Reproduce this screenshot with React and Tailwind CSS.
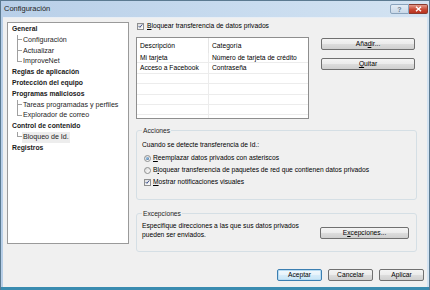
import { Fragment } from 'react';

const tree = [
    { label: 'General', children: ['Configuración', 'Actualizar', 'ImproveNet'] },
    { label: 'Reglas de aplicación' },
    { label: 'Protección del equipo' },
    { label: 'Programas maliciosos', children: ['Tareas programadas y perfiles', 'Explorador de correo'] },
    { label: 'Control de contenido', children: ['Bloqueo de Id.'] },
    { label: 'Registros' },
];

const rows = [
    ['Mi tarjeta', 'Número de tarjeta de crédito'],
    ['Acceso a Facebook', 'Contraseña'],
    ['', ''],
    ['', ''],
    ['', ''],
    ['', ''],
    ['', ''],
];

const btn =
    'flex items-center justify-center h-[12px] rounded-[2px] border border-[#707070] bg-[linear-gradient(to_bottom,#f4f4f4_0%,#ebebeb_50%,#dddddd_50%,#cfcfcf_100%)] text-black';

function Check() {
    return (
        <span className="flex h-[7px] w-[7px] shrink-0 items-center justify-center border border-[#8e8f8f] bg-[linear-gradient(135deg,#dcdcdc,#ffffff)]">
            <svg width="6" height="6" viewBox="0 0 6 6">
                <path d="M0.8 3.1 L2.3 4.6 L5.2 1" fill="none" stroke="#3b4f8a" strokeWidth="1.2" />
            </svg>
        </span>
    );
}

function Radio({ on }) {
    return (
        <span className="flex h-[7px] w-[7px] shrink-0 items-center justify-center rounded-full border border-[#8e8f8f] bg-[linear-gradient(135deg,#d8d8d8,#ffffff)]">
            {on && <span className="h-[3px] w-[3px] rounded-full bg-[radial-gradient(circle_at_35%_35%,#9ecbf0,#2a5a8c)]" />}
        </span>
    );
}

export default function App() {
    return (
        <div className="flex h-[290px] w-[430px] flex-col border-x border-t border-[#5b7a91] bg-[linear-gradient(to_right,#b8cfe8,#c9dcef_60%,#d3e3f2)] font-['Liberation_Sans',Arial,sans-serif] text-[6.7px] text-black">
            {/* title bar */}
            <div className="flex h-[16px] shrink-0 items-start justify-between pl-[3px] pr-[1px]">
                <span className="mt-[3px] text-[7.5px] leading-[10px] text-[#1e1e1e]">Configuración</span>
                <div className="mt-[3px] flex">
                    <span className="flex h-[10px] w-[19px] items-center justify-center rounded-l-[2px] border border-[#8aa3bc] bg-[linear-gradient(to_bottom,#e3ecf5,#c9d8e8)] text-[7px] font-bold leading-none text-[#6d7f93]">
                        ?
                    </span>
                    <span className="flex h-[10px] w-[19px] items-center justify-center rounded-r-[2px] border border-l-0 border-[#8a3a2e] bg-[linear-gradient(to_bottom,#e39b8c,#c94a35_55%,#b8321f)]">
                        <svg width="7" height="6" viewBox="0 0 7 6">
                            <path d="M1 0.8 L6 5.2 M6 0.8 L1 5.2" stroke="#ffffff" strokeWidth="1.4" />
                        </svg>
                    </span>
                </div>
            </div>

            {/* client */}
            <div className="mx-[2px] flex flex-1 flex-col border-t border-[#e8eef5] bg-[#f0f0f0]">
                <div className="flex items-start gap-[7px] pl-[4px] pt-[4px]">
                    {/* tree */}
                    <div className="h-[222px] w-[122px] shrink-0 border border-[#9a9a9a] bg-white pl-[4px] pt-[1px] text-[7.1px]">
                        {tree.map((node) => (
                            <Fragment key={node.label}>
                                <div className="h-[10.8px] text-[6.8px] font-bold leading-[10.8px] text-[#1a1a1a]">{node.label}</div>
                                {node.children?.map((child, i) => {
                                    const last = i === node.children.length - 1;
                                    return (
                                        <div key={child} className="flex h-[10.8px]">
                                            <div className="ml-[5px] flex w-[5px] flex-col">
                                                <div className="h-1/2 border-b border-l border-[#a0a0a0]" />
                                                <div className={last ? 'flex-1' : 'flex-1 border-l border-[#a0a0a0]'} />
                                            </div>
                                            <span
                                                className={
                                                    child === 'Bloqueo de Id.'
                                                        ? 'bg-[#ededed] px-[1px] leading-[10.8px] text-[#1e1e1e]'
                                                        : 'ml-[1px] leading-[10.8px] text-[#1e1e1e]'
                                                }
                                            >
                                                {child}
                                            </span>
                                        </div>
                                    );
                                })}
                            </Fragment>
                        ))}
                    </div>

                    {/* right pane */}
                    <div className="flex w-[281px] flex-col">
                        <div className="flex h-[8px] items-center gap-[3px] pl-[1px]">
                            <Check />
                            <span>
                                <u>B</u>loquear transferencia de datos privados
                            </span>
                        </div>

                        <div className="mt-[7px] flex items-start">
                            <div className="h-[82px] w-[173px] overflow-hidden border border-[#8e8e8e] bg-white">
                                <div className="flex h-[15px] items-center">
                                    <span className="w-[72px] border-r border-[#e5e5e5] pl-[3px] leading-[15px]">Descripción</span>
                                    <span className="pl-[3px] leading-[15px]">Categoría</span>
                                </div>
                                {rows.map((r, i) => (
                                    <div key={i} className="flex h-[10.4px] border-b border-[#ececec]">
                                        <span className="w-[72px] border-r border-[#ececec] pl-[3px] leading-[10px]">{r[0]}</span>
                                        <span className="pl-[3px] leading-[10px]">{r[1]}</span>
                                    </div>
                                ))}
                            </div>
                            <div className="ml-[12px] flex w-[94px] flex-col pt-[1px]">
                                <div className={btn}>
                                    Aña<u>d</u>ir...
                                </div>
                                <div className={btn + ' mt-[8px]'}>
                                    <u>Q</u>uitar
                                </div>
                            </div>
                        </div>

                        <fieldset className="mt-[7px] rounded-[3px] border border-[#d5dfe5] pb-[11px] pl-[5px]">
                            <legend className="px-[1px] leading-[9px] text-[#1e1e1e]">Acciones</legend>
                            <div className="mt-[5px] h-[10px] leading-[10px]">Cuando se detecte transferencia de Id.:</div>
                            <div className="ml-[2px] mt-[2px] flex h-[12px] items-center gap-[2px]">
                                <Radio on />
                                <span>
                                    <u>R</u>eemplazar datos privados con asteriscos
                                </span>
                            </div>
                            <div className="ml-[2px] flex h-[12px] items-center gap-[2px]">
                                <Radio />
                                <span>
                                    B<u>l</u>oquear transferencia de paquetes de red que contienen datos privados
                                </span>
                            </div>
                            <div className="ml-[2px] flex h-[12px] items-center gap-[2px]">
                                <Check />
                                <span>
                                    <u>M</u>ostrar notificaciones visuales
                                </span>
                            </div>
                        </fieldset>

                        <fieldset className="mt-[9px] rounded-[3px] border border-[#d5dfe5] pb-[12px] pl-[5px] pr-[7px]">
                            <legend className="px-[1px] leading-[9px] text-[#1e1e1e]">Excepciones</legend>
                            <div className="mt-[4px] flex items-start justify-between">
                                <div className="leading-[8.5px]">
                                    <div>Especifique direcciones a las que sus datos privados</div>
                                    <div>pueden ser enviados.</div>
                                </div>
                                <div className={btn + ' mt-[5px] w-[89px]'}>
                                    E<u>x</u>cepciones...
                                </div>
                            </div>
                        </fieldset>
                    </div>
                </div>

                {/* dialog buttons */}
                <div className="mt-auto flex justify-end gap-[6px] pb-[6px] pr-[3px]">
                    <div className="flex h-[12px] w-[45px] items-center justify-center rounded-[2px] border border-[#3c7fb1] bg-[linear-gradient(to_bottom,#f2f9fd_0%,#e6f3fb_50%,#d6ecf9_50%,#c7e4f6_100%)] shadow-[inset_0_0_0_1px_#b8dcf3]">
                        Aceptar
                    </div>
                    <div className={btn + ' w-[45px]'}>Cancelar</div>
                    <div className={btn + ' w-[45px]'}>Aplicar</div>
                </div>
            </div>
            <div className="h-[3px] shrink-0 bg-[#3a8cb0]" />
        </div>
    );
}
